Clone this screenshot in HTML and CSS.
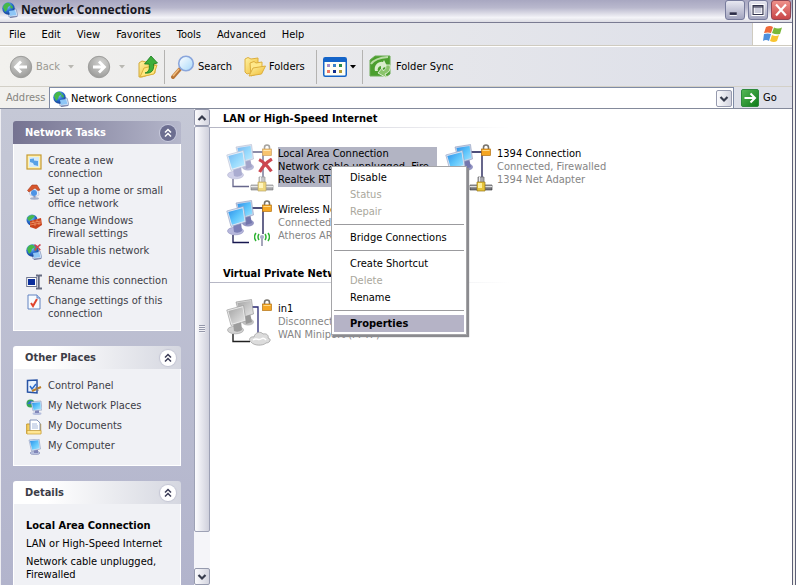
FILE: index.html
```html
<!DOCTYPE html>
<html lang="en">
<head>
<meta charset="utf-8">
<title>Network Connections</title>
<link rel="stylesheet" href="styles.css">
</head>
<body>
<svg class="defs" aria-hidden="true">
  <defs>
    <linearGradient id="screen" x1="0" y1="0" x2="1" y2="1"><stop offset="0" stop-color="#2d8ee8"/><stop offset=".5" stop-color="#5cc4fb"/><stop offset="1" stop-color="#a4e6ff"/></linearGradient>
    <linearGradient id="screen-off" x1="0" y1="0" x2="1" y2="1"><stop offset="0" stop-color="#a4a4a4"/><stop offset="1" stop-color="#e6e6e6"/></linearGradient>
    <linearGradient id="gold" x1="0" y1="0" x2="1" y2="1"><stop offset="0" stop-color="#fff3a4"/><stop offset="1" stop-color="#efb92f"/></linearGradient>
    <radialGradient id="globe-fill" cx=".4" cy=".3" r=".8"><stop offset="0" stop-color="#8fd0ff"/><stop offset=".5" stop-color="#2a6fd0"/><stop offset="1" stop-color="#0b2f80"/></radialGradient>
    <radialGradient id="disc" cx=".4" cy=".3" r=".8"><stop offset="0" stop-color="#d2d2d0"/><stop offset=".7" stop-color="#a9a9a7"/><stop offset="1" stop-color="#929290"/></radialGradient>
    <linearGradient id="lens" x1="0" y1="0" x2="1" y2="1"><stop offset="0" stop-color="#fff"/><stop offset="1" stop-color="#a6d8fa"/></linearGradient>
    <linearGradient id="greens" x1="0" y1="0" x2="1" y2="1"><stop offset="0" stop-color="#57b957"/><stop offset="1" stop-color="#0d7a18"/></linearGradient>
    <symbol id="pcs" viewBox="0 0 48 48">
      <path d="M26 8h11v26M7 35v7.500h16" fill="none" stroke="#16164f" stroke-width="1.300"/>
      <ellipse cx="22" cy="23" rx="6" ry="3.500" fill="#9294c2"/><path d="M18 15l6-1 2 9-6 2z" fill="#7376ad"/>
      <path d="M10 3L25.500 .5 27.500 15 14 19z" fill="#c9d4ea" stroke="#8b98bb" stroke-width=".6"/><path d="M11.500 4l13-2 1.800 12-12 3.500z" fill="url(#screen)"/>
      <ellipse cx="9.500" cy="31" rx="8" ry="3.800" fill="#b6b7dc" stroke="#8f91bd" stroke-width=".6"/><path d="M7 24l8-2 1 9q-4 3-8 1z" fill="#7d80b7"/>
      <path d="M.8 11L17.500 6.500l2.500 15.500L5 26.500z" fill="#dbe5f4" stroke="#8d9cc0" stroke-width=".6"/><path d="M2.300 12L16.500 8.200l2 12.800L6 24.800z" fill="url(#screen)"/>
    </symbol>
    <symbol id="pcs-off" viewBox="0 0 48 48">
      <path d="M26 8h6v26" fill="none" stroke="#292973" stroke-width="1.300"/><path d="M7 35v7.500h17" fill="none" stroke="#202020" stroke-width="1.400"/>
      <ellipse cx="22" cy="23" rx="6" ry="3.500" fill="#c0c0c0"/><path d="M18 15l6-1 2 9-6 2z" fill="#989898"/>
      <path d="M10 3L25.500 .5 27.500 15 14 19z" fill="#d8d8d8" stroke="#8c8c8c" stroke-width=".6"/><path d="M11.500 4l13-2 1.800 12-12 3.500z" fill="url(#screen-off)"/>
      <ellipse cx="9.500" cy="31" rx="8" ry="3.800" fill="#d2d2d2" stroke="#999" stroke-width=".6"/><path d="M7 24l8-2 1 9q-4 3-8 1z" fill="#9d9d9d"/>
      <path d="M.8 11L17.500 6.500l2.500 15.500L5 26.500z" fill="#ececec" stroke="#909090" stroke-width=".6"/><path d="M2.300 12L16.500 8.200l2 12.800L6 24.800z" fill="url(#screen-off)"/>
      <path d="M25 43c-3-2-1-6 3-5 1-5 7-6 9-3 4-1 6 2 5 4 4 1 2 5-2 5-3 3-12 3-15-1z" fill="#dcdcdc" stroke="#a3a3a3" stroke-width=".8"/><path d="M27 41c4-3 5 1 8-1s4 0 5 1" stroke="#fff" stroke-width="1.500" fill="none"/>
    </symbol>
    <symbol id="lock" viewBox="0 0 10 12"><path d="M2.500 6V3.500a2.500 2.500 0 0 1 5 0V6" fill="none" stroke="#77736c" stroke-width="1.600"/><rect x=".5" y="5" width="9" height="6.500" fill="#f5a623" stroke="#b27316" stroke-width=".7"/><path d="M1.500 6.500h7" stroke="#ffd987"/></symbol>
    <symbol id="plug" viewBox="0 0 24 16"><path d="M1 9h22v5H1z" fill="#77777c" stroke="#333" stroke-width=".6"/><path d="M1 10.500h22" stroke="#e0e0e0" stroke-width="1.500"/><path d="M9 1h6v6H9z" fill="#a9a9ae" stroke="#666" stroke-width=".7"/><path d="M10.500 1v5" stroke="#ececf0"/><path d="M8 6h8v9H8z" fill="#e7c43a" stroke="#97761a" stroke-width=".7"/><path d="M9 7h4v5H9z" fill="#fff09a"/></symbol>
    <symbol id="waves" viewBox="0 0 16 14"><path d="M8 4v10" stroke="#8789a5" stroke-width="1.500"/><circle cx="8" cy="5" r="2" fill="#a9abc8"/><path d="M5 2q-2 3 0 6M11 2q2 3 0 6M2 1q-3 4 0 8M14 1q3 4 0 8" fill="none" stroke="#2fb334" stroke-width="1.500"/></symbol>
    <symbol id="cross" viewBox="0 0 14 14"><path d="M1 1.500q6 3 11.500 11M13 1Q6 5 1.500 13" fill="none" stroke="#cd4650" stroke-width="3"/></symbol>
    <symbol id="globe" viewBox="0 0 16 16"><path d="M6 7l8 0 2 7-9 1z" fill="#dfe8f8" stroke="#7d8fb8" stroke-width=".7"/><circle cx="6.500" cy="6.500" r="6.200" fill="url(#globe-fill)"/><path d="M1 5q2-5 6-4l2 2-3 2-1 3-2 2zM9 3l2 2-1 2-2-2z" fill="#46b848"/><path d="M7 9l6-1 1.500 5-6.500 1z" fill="#8fc6f6"/><path d="M8 15.500l7-1" stroke="#7880a8" stroke-width="1.200"/></symbol>
    <symbol id="arrow-disc" viewBox="0 0 24 24"><circle cx="12" cy="12" r="10.700" fill="url(#disc)" stroke="#9d9d9b"/><path d="M18 12H7M12 6.500L6.500 12l5.500 5.500" fill="none" stroke="#fff" stroke-width="2.800"/></symbol>
    <symbol id="up" viewBox="0 0 20 24"><path d="M1 8l3-2 4 1 1 2 8-2v11L4 22H1z" fill="url(#gold)" stroke="#d2a93a"/><path d="M2 22l4-9 13-3-3 9z" fill="#ffe77d" stroke="#dbb13c"/><path d="M7 18c4-1 5-5 4-9H6.500L13 1l6.500 7-4 1c1 6-2 10-8.500 9z" fill="#3fae3b" stroke="#157a1d" stroke-width=".8"/></symbol>
    <symbol id="search" viewBox="0 0 24 24"><path d="M2 22l7-8" stroke="#b87536" stroke-width="4" stroke-linecap="round"/><path d="M2 21l6-7" stroke="#f2bd7d" stroke-width="1.500"/><circle cx="15" cy="8.500" r="7.300" fill="url(#lens)" stroke="#8aa6dc" stroke-width="1.600"/></symbol>
    <symbol id="folders" viewBox="0 0 22 20"><path d="M1 2l3-1.500L7 2l7-1v13L3 17 1 15z" fill="url(#gold)" stroke="#dcae3e"/><path d="M6 6l4-1.500 2 1.500 6-1v10L7 19z" fill="#ffe88a" stroke="#dcae3e"/><path d="M5 19l4-8 12.500-2-4 8z" fill="url(#gold)" stroke="#dcae3e"/></symbol>
    <symbol id="views" viewBox="0 0 24 20"><rect x=".75" y=".75" width="22.500" height="18.500" rx="1.500" fill="#fffff4" stroke="#1464c8" stroke-width="1.500"/><path d="M1 1h22v4H1z" fill="#1464c8"/><path d="M4 7h3v3H4z" fill="#a58cc9"/><path d="M10 7h3v3h-3z" fill="#3b83c9"/><path d="M16 7h3v3h-3z" fill="#28884b"/><path d="M4 13h3v3H4z" fill="#ee7664"/><path d="M10 13h3v3h-3z" fill="#122f8d"/><path d="M16 13h3v3h-3z" fill="#b19b34"/></symbol>
    <symbol id="sync" viewBox="0 0 24 24"><path d="M1 5l5-4h15v18l-3 2H1z" fill="#4b9f2e" stroke="#6bab55"/><path d="M2 9q4-6 17-7" stroke="#b9dca4" stroke-width="2" fill="none"/><path d="M6 16a7 7 0 0 1 8-9l1-2 3 6-6 3 0-3a3.500 3.500 0 0 0-3 5z" fill="#d9edcb"/><path d="M21 10a7 7 0 0 1-5 9l2 4-9-5 4-5 1.500 3q3-2 2.500-6z" fill="#8bc46c" stroke="#e3f2d9" stroke-width=".9"/></symbol>
    <symbol id="flag" viewBox="0 0 20 18"><path d="M3 2q4-2 7 0L8 8Q5 7 1 8z" fill="#ef6a3a"/><path d="M11 2.500q4 2 8 0L17 9q-4 1-8-1z" fill="#79b83b"/><path d="M1 9q4-1 7 0l-2 7q-3-2-6 0z" fill="#4e8fdd"/><path d="M9 10q4 2 7 0l-2 6q-3 2-7 0z" fill="#f8c431"/></symbol>
    <symbol id="t-new" viewBox="0 0 16 16"><rect x="1" y="1" width="14" height="14" fill="#fff1b0" stroke="#c59a32" stroke-width="1.200"/><path d="M3 3h10v10H3z" fill="#d4eafb"/><path d="M4 5l4-.5v2l4 .5v5l-4-1-1-2-3-1z" fill="#58a1e6"/></symbol>
    <symbol id="t-home" viewBox="0 0 16 16"><path d="M3 6h9l1 5-4 2-5-2z" fill="#e9ecf6" stroke="#a8b0cc" stroke-width=".5"/><path d="M1.500 6.500L6 1l5 0 3 5-2 .5L9 4 3 8z" fill="#d8562c" stroke="#a33a1c" stroke-width=".6"/><circle cx="8" cy="9" r="3" fill="#4c93e5"/><path d="M7.500 12h2v3h-2z" fill="#8a93b6"/><ellipse cx="8.500" cy="14.500" rx="4.500" ry="1.200" fill="#a6b0ca"/></symbol>
    <symbol id="t-wall" viewBox="0 0 16 16"><circle cx="6" cy="6" r="5.500" fill="url(#globe-fill)"/><path d="M1 4q4-5 8-2L6 5 3 7z" fill="#49b84c"/><path d="M4 7l11-3 1 7-6 4-6-2z" fill="#c9431e"/><path d="M4 9l11-2M4 11l11-2M7 6v3M11 5v3M9 9v3M13 8v3" stroke="#f4a071" stroke-width=".7"/></symbol>
    <symbol id="t-rename" viewBox="0 0 16 16"><rect x=".7" y="3.500" width="10" height="9" fill="#fff" stroke="#707790"/><path d="M2 5h7v6H2z" fill="#0b2e9c"/><path d="M10 1.500h2l.8 1 .7-1H16M12.800 2v12M10 14.500h2l.8-1 .7 1H16" fill="none" stroke="#656b81" stroke-width="1.800"/></symbol>
    <symbol id="t-check" viewBox="0 0 16 16"><path d="M2 1h9l3 3v11H2z" fill="#f7fbff" stroke="#6383c1"/><path d="M11 1v3h3" fill="#bed2f1" stroke="#6383c1"/><path d="M5 9l2 3 4-7" fill="none" stroke="#e0452f" stroke-width="2"/></symbol>
    <symbol id="t-panel" viewBox="0 0 16 16"><path d="M1.500 1.500L11 1v13l-9.500-1z" fill="#eaf3ff" stroke="#2853a5" stroke-width="1.500"/><path d="M4 7l2 3 4-5" stroke="#2c6bca" stroke-width="1.500" fill="none"/><path d="M6 12l9-4" stroke="#bc802a" stroke-width="2"/><path d="M10 8l2 4" stroke="#6f7587" stroke-width="1.500"/></symbol>
    <symbol id="t-pc" viewBox="0 0 16 16"><ellipse cx="9" cy="14" rx="5" ry="1.700" fill="#b6bfde" stroke="#8088b0" stroke-width=".5"/><path d="M8 11h4v3H8z" fill="#8186b8"/><path d="M3 1l10-1 1.500 10-9 2z" fill="#d7e3f6" stroke="#8d9cc0" stroke-width=".6"/><path d="M4 2l8.300-.8L13.500 9.300l-7.300 1.500z" fill="url(#screen)"/></symbol>
    <symbol id="t-net" viewBox="0 0 16 16"><circle cx="4.500" cy="4.500" r="4" fill="#39a755"/><path d="M1 5q3-5 6-3L5 5z" fill="#2f73d0"/><ellipse cx="11" cy="14.500" rx="4.500" ry="1.500" fill="#b6bfde"/><path d="M9 10h4v4H9z" fill="#8186b8"/><path d="M5 3l10-1 1 9-9 1z" fill="#d7e3f6" stroke="#8d9cc0" stroke-width=".6"/><path d="M6 4l8.200-.8.800 6.800L7.600 11z" fill="url(#screen)"/></symbol>
    <symbol id="t-docs" viewBox="0 0 16 16"><path d="M.7 5h14v9.500h-14z" fill="#f6cf5c" stroke="#c59a32"/><path d="M4 1h7l3 3v8H4z" fill="#fff" stroke="#8494ba"/><path d="M6 5h5M6 7h6M6 9h6" stroke="#8fa5d0" stroke-width=".8"/><path d="M1 11.500h14v3.500H1z" fill="#ffe694" stroke="#c89c2e" stroke-width=".7"/></symbol>
    <symbol id="chevrons" viewBox="0 0 16 16"><path d="M5 7.500l3-3 3 3M5 11.500l3-3 3 3" fill="none" stroke="currentColor" stroke-width="1.500"/></symbol>
    <symbol id="go" viewBox="0 0 18 18"><rect x=".5" y=".5" width="17" height="17" rx="1.500" fill="url(#greens)" stroke="#2d8a3c"/><path d="M3.500 9H14M9.500 4.500L14 9l-4.500 4.500" fill="none" stroke="#fff" stroke-width="2"/></symbol>
    <symbol id="angle" viewBox="0 0 10 8"><path d="M1.500 2L5 5.500 8.500 2" fill="none" stroke="#363b4c" stroke-width="2.200"/></symbol>
    <symbol id="caret" viewBox="0 0 6 4"><path d="M0 0h6L3 3.500z" fill="currentColor"/></symbol>
  </defs>
</svg>

<div class="window">
  <header class="titlebar">
    <svg class="i16"><use href="#globe"/></svg>
    <h1>Network Connections</h1>
    <button class="cap" aria-label="Minimize"><svg viewBox="0 0 20 20"><path d="M4 14.500h8" stroke="#fff" stroke-width="4"/><path d="M4 14h8" stroke="#2c2d48" stroke-width="3"/></svg></button>
    <button class="cap" aria-label="Maximize"><svg viewBox="0 0 20 20"><path d="M4.500 5h11v10h-11z" fill="#c9cad9" stroke="#fff" stroke-width="3.500"/><path d="M4.500 5h11v10h-11zM4.500 6.500h11" fill="none" stroke="#34354f" stroke-width="1.300"/></svg></button>
    <button class="cap close" aria-label="Close"><svg viewBox="0 0 20 20"><path d="M4.500 4l11 12M15.500 4l-11 12" stroke="#fff" stroke-width="2.400"/></svg></button>
  </header>

  <div class="menubar">
    <nav>
      <button>File</button><button>Edit</button><button>View</button><button>Favorites</button><button>Tools</button><button>Advanced</button><button>Help</button>
    </nav>
    <div class="brand"><svg><use href="#flag"/></svg></div>
  </div>

  <div class="toolbar">
    <button class="tool back" disabled><svg class="i24"><use href="#arrow-disc"/></svg>Back</button>
    <button class="drop" disabled aria-label="Back history"><svg><use href="#caret"/></svg></button>
    <button class="tool fwd" disabled aria-label="Forward"><svg class="i24 flip"><use href="#arrow-disc"/></svg></button>
    <button class="drop" disabled aria-label="Forward history"><svg><use href="#caret"/></svg></button>
    <button class="tool up" aria-label="Up"><svg><use href="#up"/></svg></button>
    <span class="rule"></span>
    <button class="tool search"><svg class="i24"><use href="#search"/></svg>Search</button>
    <button class="tool folders"><svg class="i22"><use href="#folders"/></svg>Folders</button>
    <span class="rule"></span>
    <button class="tool views" aria-label="Views"><svg class="i24"><use href="#views"/></svg><svg class="caret"><use href="#caret"/></svg></button>
    <span class="rule"></span>
    <button class="tool"><svg class="i24"><use href="#sync"/></svg>Folder Sync</button>
  </div>

  <form class="address">
    <label for="addr">Address</label>
    <div class="combo">
      <svg class="i16"><use href="#globe"/></svg>
      <input id="addr" type="text" value="Network Connections">
      <button type="button" class="sb" aria-label="Show addresses"><svg><use href="#angle"/></svg></button>
    </div>
    <button type="button" class="go"><svg><use href="#go"/></svg>Go</button>
  </form>

  <div class="body">
    <aside class="side">
      <section class="panel primary">
        <h2>Network Tasks<button aria-label="Collapse Network Tasks"><svg><use href="#chevrons"/></svg></button></h2>
        <ul>
          <li><a href="#"><svg class="i16"><use href="#t-new"/></svg><span>Create a new<br>connection</span></a></li>
          <li><a href="#"><svg class="i16"><use href="#t-home"/></svg><span>Set up a home or small<br>office network</span></a></li>
          <li><a href="#"><svg class="i16"><use href="#t-wall"/></svg><span>Change Windows<br>Firewall settings</span></a></li>
          <li><a href="#"><svg class="i16" viewBox="0 0 16 16"><use href="#globe" width="16" height="16"/><use href="#cross" x="8" y="0" width="7" height="7"/></svg><span>Disable this network<br>device</span></a></li>
          <li><a href="#"><svg class="i16"><use href="#t-rename"/></svg><span>Rename this connection</span></a></li>
          <li><a href="#"><svg class="i16"><use href="#t-check"/></svg><span>Change settings of this<br>connection</span></a></li>
        </ul>
      </section>
      <section class="panel">
        <h2>Other Places<button aria-label="Collapse Other Places"><svg><use href="#chevrons"/></svg></button></h2>
        <ul>
          <li><a href="#"><svg class="i16"><use href="#t-panel"/></svg><span>Control Panel</span></a></li>
          <li><a href="#"><svg class="i16"><use href="#t-net"/></svg><span>My Network Places</span></a></li>
          <li><a href="#"><svg class="i16"><use href="#t-docs"/></svg><span>My Documents</span></a></li>
          <li><a href="#"><svg class="i16"><use href="#t-pc"/></svg><span>My Computer</span></a></li>
        </ul>
      </section>
      <section class="panel">
        <h2>Details<button aria-label="Collapse Details"><svg><use href="#chevrons"/></svg></button></h2>
        <div class="details">
          <p><strong>Local Area Connection</strong></p>
          <p>LAN or High-Speed Internet</p>
          <p>Network cable unplugged,<br>Firewalled</p>
        </div>
      </section>
    </aside>
    <div class="scroll">
      <button class="sb" aria-label="Scroll up"><svg class="flip-y"><use href="#angle"/></svg></button>
      <div class="thumb"><span class="grip"></span></div>
      <button class="sb" aria-label="Scroll down"><svg><use href="#angle"/></svg></button>
    </div>

    <main class="content">
      <section class="group">
        <h2>LAN or High-Speed Internet</h2>
        <ul>
          <li class="conn selected">
            <svg viewBox="0 0 48 48"><g opacity=".65"><use href="#pcs" width="48" height="48"/><use href="#lock" x="36" y="0" width="10" height="12"/><use href="#plug" x="24" y="32" width="24" height="16"/></g><use href="#cross" x="32" y="14" width="15" height="15"/></svg>
            <div class="info"><b>Local Area Connection</b><span>Network cable unplugged, Fire...</span><span>Realtek RT</span></div>
          </li>
          <li class="conn">
            <svg viewBox="0 0 48 48"><use href="#pcs" width="48" height="48"/><use href="#lock" x="36" y="0" width="10" height="12"/><use href="#plug" x="24" y="32" width="24" height="16"/></svg>
            <div class="info"><b>1394 Connection</b><span>Connected, Firewalled</span><span>1394 Net Adapter</span></div>
          </li>
          <li class="conn">
            <svg viewBox="0 0 48 48"><use href="#pcs" width="48" height="48"/><use href="#lock" x="36" y="0" width="10" height="12"/><use href="#waves" x="28" y="32" width="16" height="14"/></svg>
            <div class="info"><b>Wireless Network</b><span>Connected</span><span>Atheros AR</span></div>
          </li>
        </ul>
      </section>
      <section class="group">
        <h2>Virtual Private Network</h2>
        <ul>
          <li class="conn">
            <svg viewBox="0 0 48 48"><use href="#pcs-off" width="48" height="48"/><use href="#lock" x="36" y="0" width="10" height="12"/></svg>
            <div class="info"><b>in1</b><span>Disconnected</span><span>WAN Miniport (PPTP)</span></div>
          </li>
        </ul>
      </section>
      <menu class="context">
        <li><button>Disable</button></li>
        <li><button disabled>Status</button></li>
        <li><button disabled>Repair</button></li>
        <li class="sep"></li>
        <li><button>Bridge Connections</button></li>
        <li class="sep"></li>
        <li><button>Create Shortcut</button></li>
        <li><button disabled>Delete</button></li>
        <li><button>Rename</button></li>
        <li class="sep"></li>
        <li><button class="active">Properties</button></li>
      </menu>
    </main>
  </div>
</div>
</body>
</html>
```
FILE: styles.css
```css
* { box-sizing: border-box; }
body {
  margin: 0;
  height: 100vh;
  overflow: hidden;
  background: #fff;
  color: #000;
  font: 11px/13px Tahoma, "DejaVu Sans Condensed", sans-serif;
}
h1, h2, ul, p, menu { margin: 0; padding: 0; list-style: none; }
h2 { font-size: 11px; }
button, input { font: inherit; color: inherit; background: none; border: 0; padding: 0; margin: 0; }
a { color: inherit; text-decoration: none; }
svg { display: block; flex: none; overflow: visible; }
.defs { position: absolute; width: 0; height: 0; }
.i16 { width: 16px; height: 16px; }
.i22 { width: 22px; height: 20px; }
.i24 { width: 24px; height: 24px; }
.flip { transform: scaleX(-1); }
.flip-y { transform: scaleY(-1); }

.window {
  display: flex;
  flex-direction: column;
  height: 100vh;
  margin-right: 1px;
  border-right: 4px double #5d5f76;
  background: linear-gradient(90deg, #f2f1ee, #dee0e9 90%);
}

.titlebar {
  display: flex;
  align-items: center;
  gap: 3px;
  height: 23px;
  padding: 0 1px 3px 2px;
  background: linear-gradient(#a8a7c1, #b9b8cd 35%, #f4f4f8 80%, #dcdce4);
  border-bottom: 1px solid #7a7b92;
}
.titlebar h1 { flex: 1; font: bold 12px/16px "Trebuchet MS", "Open Sans", sans-serif; color: #17171f; }
.cap {
  width: 20px;
  height: 20px;
  border: 1px solid #777b9c;
  border-radius: 3px;
  background: linear-gradient(#e8e8f1, #a2a4bf);
}
.cap svg { width: 18px; height: 18px; }
.close { background: linear-gradient(#ef918a, #c84648); border-color: #8f4654; }

.menubar { display: flex; height: 23px; border-bottom: 1px solid #cfcbc0; }
.menubar nav { display: flex; flex: 1; padding-left: 1px; }
.menubar button { padding: 0 8px; }
.brand { display: flex; align-items: center; justify-content: center; width: 40px; background: #fff; border-left: 1px solid #cfcbc0; }
.brand svg { width: 20px; height: 18px; }

.toolbar { display: flex; align-items: center; height: 41px; padding-left: 9px; border-top: 1px solid #fff; border-bottom: 1px solid #d3d0c7; }
.tool { display: flex; align-items: center; gap: 3px; height: 34px; }
.tool:disabled { color: #9a9992; }
.drop:disabled { color: #b9b8b2; }
.back { width: 59px; }
.drop { width: 19px; }
.drop svg, .caret { width: 6px; height: 4px; }
.fwd { width: 32px; }
.up { width: 26px; }
.up svg { width: 20px; height: 24px; }
.search { width: 73px; }
.folders { width: 72px; }
.views { width: 39px; }
.rule { width: 1px; height: 34px; margin-right: 6px; background: #b4b3b1; }

.address { display: flex; align-items: center; height: 21px; padding: 0 1px 0 6px; }
.address label { width: 43px; color: #86857f; }
.combo { display: flex; flex: 1; align-items: center; align-self: stretch; padding: 1px 1px 0 3px; background: #fff; border: 1px solid #7f8ba5; border-bottom: 0; }
.combo input { flex: 1; min-width: 0; padding-left: 2px; outline: 0; }
.go { display: flex; align-items: center; gap: 4px; width: 50px; margin-left: 7px; }
.go svg { width: 18px; height: 18px; }
.sb {
  display: flex;
  flex: none;
  align-items: center;
  justify-content: center;
  width: 16px;
  height: 17px;
  border: 1px solid #969aae;
  border-radius: 2px;
  background: linear-gradient(90deg, #fbfbfd, #d3d4df);
}
.sb svg { width: 10px; height: 8px; }

.body { display: flex; flex: 1; min-height: 0; border-top: 1px solid #848a9b; }
.side {
  display: flex;
  flex-direction: column;
  gap: 15px;
  width: 194px;
  padding: 12px 13px 0;
  overflow: hidden;
  border-left: 1px solid #eeeef2;
  padding-left: 12px;
  background: linear-gradient(#c5c8d6, #b2b4cc);
}
.panel { flex: none; color: #3d3d47; }
.panel h2 {
  display: flex;
  align-items: center;
  justify-content: space-between;
  height: 23px;
  padding: 0 5px 0 12px;
  border-radius: 3px 3px 0 0;
  background: linear-gradient(90deg, #fff 20%, #d5d7e0);
}
.panel h2 button { width: 16px; height: 16px; border-radius: 8px; background: #fff; box-shadow: 0 0 1px 1px #c4c6d4; color: #3b3c57; }
.panel h2 svg { width: 16px; height: 16px; }
.primary h2 { background: linear-gradient(90deg, #757391, #b5b7cb); color: #fff; }
.primary h2 button { background: #6c6e90; box-shadow: 0 0 0 1px #c7c9dc; color: #fff; }
.panel ul, .details { background: #f0f1f5; border: 1px solid #fff; border-top: 0; }
.panel ul { display: flex; flex-direction: column; gap: 4px; padding: 10px 0 10px 12px; }
.panel a { display: flex; gap: 6px; min-height: 16px; white-space: nowrap; }
.details { display: flex; flex-direction: column; gap: 5px; padding: 15px 0 15px 12px; color: #000; white-space: nowrap; }

.scroll { display: flex; flex-direction: column; width: 16px; background: #f5f5f9; }
.thumb {
  display: flex;
  align-items: center;
  justify-content: center;
  height: 406px;
  margin-bottom: auto;
  border: 1px solid #9da1b5;
  border-radius: 2px;
  background: linear-gradient(90deg, #fcfcfe, #cfd0dc);
}
.grip { width: 6px; height: 8px; background: repeating-linear-gradient(#9497aa 0 1px, #f2f2f6 1px 2px); }

.content { position: relative; flex: 1; min-width: 0; background: #fff; }
.group { padding-top: 3px; }
.group h2 {
  height: 16px;
  padding: 0 13px;
  border-bottom: 1px solid;
  border-image: linear-gradient(90deg, #b5b6c4, #fff 300px) 1;
}
.group ul { display: grid; grid-template-columns: repeat(2, 219px); row-gap: 16px; padding: 19px 0 21px 16px; }
.conn { display: flex; gap: 4px; height: 40px; }
.conn svg { width: 48px; height: 48px; margin-top: -3px; }
.info { display: flex; flex-direction: column; width: 159px; color: #858585; white-space: nowrap; overflow: hidden; }
.info b { color: #000; font-weight: normal; }
.selected .info { background: #b2b4c3; color: #000; }

.context {
  position: absolute;
  left: 121px;
  top: 57px;
  width: 136px;
  padding: 2px;
  background: #fff;
  border: 1px solid #a5a5a8;
  box-shadow: 2px 2px 1px #8b8b8f;
}
.context button { display: block; width: 100%; height: 17px; padding-left: 16px; text-align: left; }
.context button:disabled { color: #aaa79c; }
.context .active { background: #b5b3c6; font-weight: bold; }
.sep { height: 9px; border-top: 4px solid #fff; border-bottom: 4px solid #fff; background: #9b9b9e; }
```
